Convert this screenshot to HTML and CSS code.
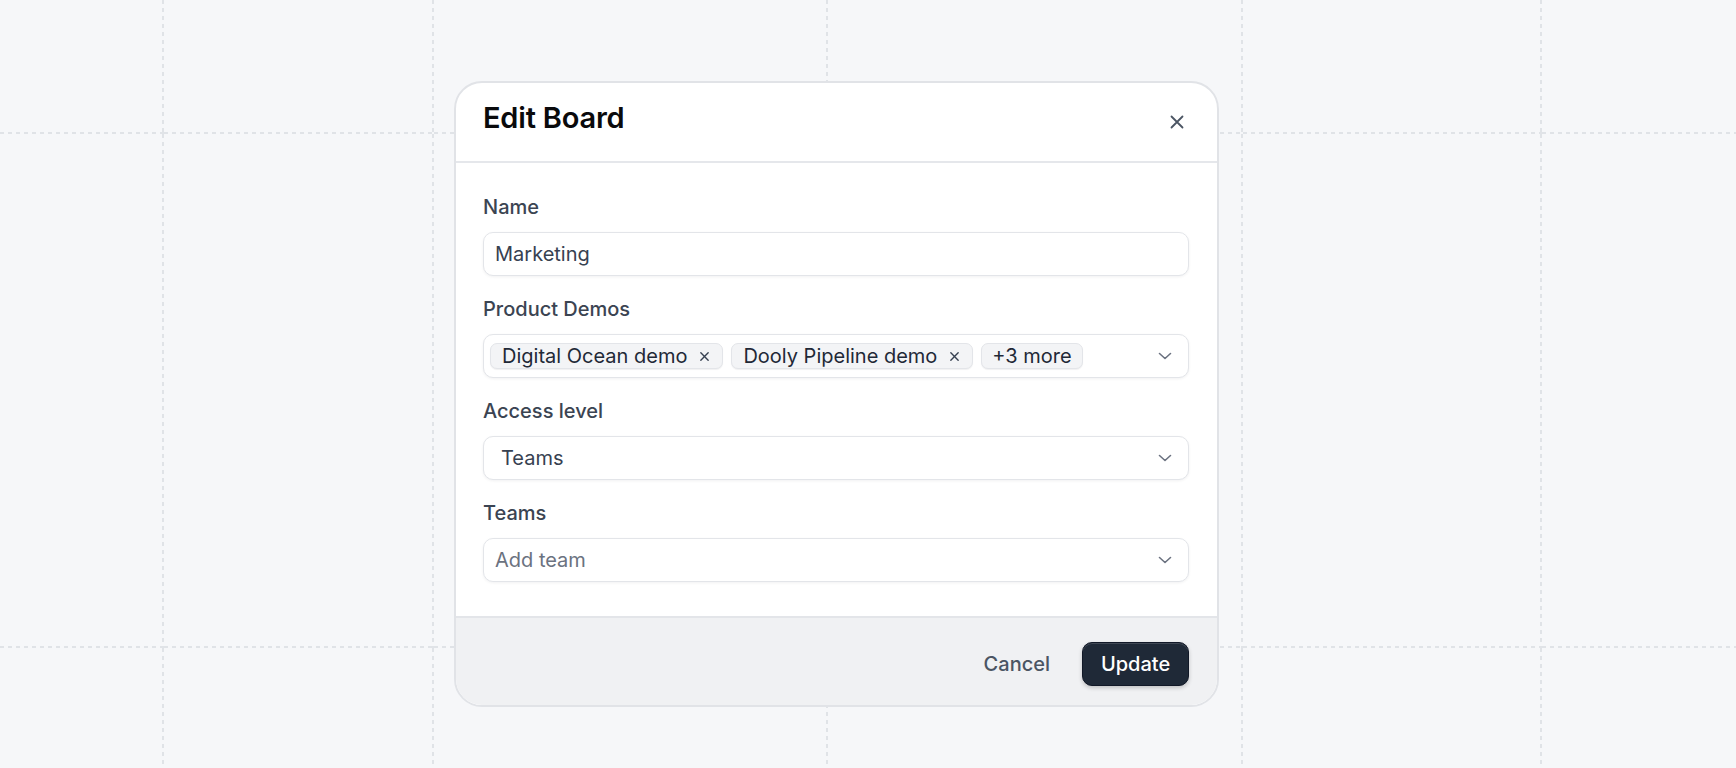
FILE: index.html
```html
<!DOCTYPE html>
<html lang="en">
<head>
    <meta charset="UTF-8">
    <title>Edit Board</title>
    <link rel="stylesheet" href="styles.css">
</head>
<body>
    <div class="canvas">
        <div></div><div></div><div></div><div></div><div></div><div></div>
        <div></div><div></div><div></div><div></div><div></div><div></div>
        <div></div><div></div><div></div><div></div><div></div><div></div>
    </div>

    <div class="modal">
        <div class="modal-header">
            <h2>Edit Board</h2>
            <button class="close-btn" aria-label="Close">
                <svg width="14" height="14" viewBox="0 0 14 14"><path d="M1.5 1.5l11 11M12.5 1.5l-11 11" stroke="currentColor" stroke-width="1.8" stroke-linecap="round"/></svg>
            </button>
        </div>

        <div class="modal-body">
            <div class="field">
                <label for="name">Name</label>
                <input type="text" id="name" class="text-input" value="Marketing">
            </div>

            <div class="field">
                <label>Product Demos</label>
                <div class="select multi">
                    <div class="tags">
                        <span class="tag">Digital Ocean demo
                            <svg width="11" height="11" viewBox="0 0 12 12"><path d="M2 2l8 8M10 2l-8 8" stroke="currentColor" stroke-width="1.5" stroke-linecap="round"/></svg>
                        </span>
                        <span class="tag">Dooly Pipeline demo
                            <svg width="11" height="11" viewBox="0 0 12 12"><path d="M2 2l8 8M10 2l-8 8" stroke="currentColor" stroke-width="1.5" stroke-linecap="round"/></svg>
                        </span>
                        <span class="tag more">+3 more</span>
                    </div>
                    <svg class="chevron" width="14" height="8" viewBox="0 0 14 8"><path d="M1.5 1.5l5.5 5 5.5-5" fill="none" stroke="currentColor" stroke-width="1.6" stroke-linecap="round" stroke-linejoin="round"/></svg>
                </div>
            </div>

            <div class="field">
                <label>Access level</label>
                <div class="select single">
                    <span class="value">Teams</span>
                    <svg class="chevron" width="14" height="8" viewBox="0 0 14 8"><path d="M1.5 1.5l5.5 5 5.5-5" fill="none" stroke="currentColor" stroke-width="1.6" stroke-linecap="round" stroke-linejoin="round"/></svg>
                </div>
            </div>

            <div class="field">
                <label>Teams</label>
                <div class="select">
                    <span class="placeholder">Add team</span>
                    <svg class="chevron" width="14" height="8" viewBox="0 0 14 8"><path d="M1.5 1.5l5.5 5 5.5-5" fill="none" stroke="currentColor" stroke-width="1.6" stroke-linecap="round" stroke-linejoin="round"/></svg>
                </div>
            </div>
        </div>

        <div class="modal-footer">
            <button class="btn-cancel">Cancel</button>
            <button class="btn-primary">Update</button>
        </div>
    </div>
</body>
</html>
```

FILE: styles.css
```css
body {
    margin: 0;
    height: 100vh;
    overflow: hidden;
    background-color: #f6f7f9;
    font-family: Inter, "Noto Sans", sans-serif;
    color: #374151;
}

/* background grid with dashed lines */
.canvas {
    display: grid;
    grid-template-columns: 164px 270px 394px 415px 299px 1fr;
    grid-template-rows: 134px 514px 1fr;
    height: 100vh;
}
.canvas div {
    background-image:
        repeating-linear-gradient(to bottom, #e0e3e7 0 4px, transparent 4px 8px),
        repeating-linear-gradient(to right, #e0e3e7 0 4px, transparent 4px 8px);
    background-size: 2px 100%, 100% 2px;
    background-position: right top, left bottom;
    background-repeat: no-repeat;
}
.canvas div:nth-child(6n) {
    background-size: 0 0, 100% 2px;
}
.canvas div:nth-child(n+13) {
    background-size: 2px 100%, 0 0;
}
.canvas div:nth-child(18) {
    background-size: 0 0, 0 0;
}

.modal {
    position: absolute;
    left: 454px;
    top: 81px;
    width: 765px;
    box-sizing: border-box;
    background: white;
    border: 2px solid #e1e3e7;
    border-radius: 28px;
    overflow: hidden;
}

.modal-header {
    display: flex;
    justify-content: space-between;
    align-items: center;
    padding: 18px 28px 26px 27px;
    border-bottom: 2px solid #e5e7eb;
}
.modal-header h2 {
    margin: 0;
    font-size: 29px;
    line-height: 34px;
    font-weight: 600;
    color: #0a0a0c;
    letter-spacing: -0.2px;
}
.close-btn {
    width: 24px;
    height: 24px;
    padding: 0;
    margin-top: 8px;
    border: none;
    background: none;
    color: #4b5563;
    display: flex;
    align-items: center;
    justify-content: center;
}

.modal-body {
    padding: 31px 28px 34px 27px;
    display: flex;
    flex-direction: column;
    gap: 20px;
}
.field label {
    display: block;
    font-size: 20px;
    line-height: 26px;
    font-weight: 500;
    color: #3b4452;
    margin-bottom: 12px;
}

.text-input,
.select {
    display: flex;
    align-items: center;
    width: 100%;
    height: 44px;
    box-sizing: border-box;
    border: 1px solid #e3e5e9;
    border-radius: 10px;
    background: white;
    box-shadow: 0 1px 3px rgba(16, 24, 40, 0.06);
    font-family: inherit;
    font-size: 20px;
    color: #374151;
}
.text-input {
    padding: 0 11px;
    outline: none;
}
.select {
    padding: 0 16px 0 11px;
    justify-content: space-between;
}
.select.multi {
    padding-left: 6px;
}
.select.single {
    padding-left: 17px;
}
.placeholder {
    color: #6b7280;
}
.chevron {
    color: #6b7280;
    flex-shrink: 0;
}

.tags {
    display: flex;
    gap: 8px;
}
.tag {
    display: inline-flex;
    align-items: center;
    gap: 12px;
    height: 26px;
    box-sizing: border-box;
    padding: 0 12px 0 11px;
    background: #f3f4f6;
    border: 1px solid #e3e5e9;
    border-radius: 7px;
    box-shadow: 0 1px 1px rgba(16, 24, 40, 0.06);
    font-size: 20px;
    color: #1f2937;
}
.tag svg {
    color: #374151;
}
.tag.more {
    padding: 0 10px;
}

.modal-footer {
    display: flex;
    justify-content: flex-end;
    gap: 16px;
    padding: 24px 28px 19px;
    background: #f0f1f3;
    border-top: 2px solid #e3e5e9;
}
.modal-footer button {
    height: 44px;
    font-family: inherit;
    font-size: 20px;
    font-weight: 500;
    border-radius: 10px;
    cursor: pointer;
}
.btn-cancel {
    padding: 0 16px;
    border: none;
    background: none;
    color: #4b5563;
}
.btn-primary {
    width: 107px;
    border: 1px solid #111827;
    background: #1f2937;
    color: white;
    box-shadow: inset 0 1px 0 rgba(255, 255, 255, 0.15), 0 2px 4px rgba(0, 0, 0, 0.2);
}
```
